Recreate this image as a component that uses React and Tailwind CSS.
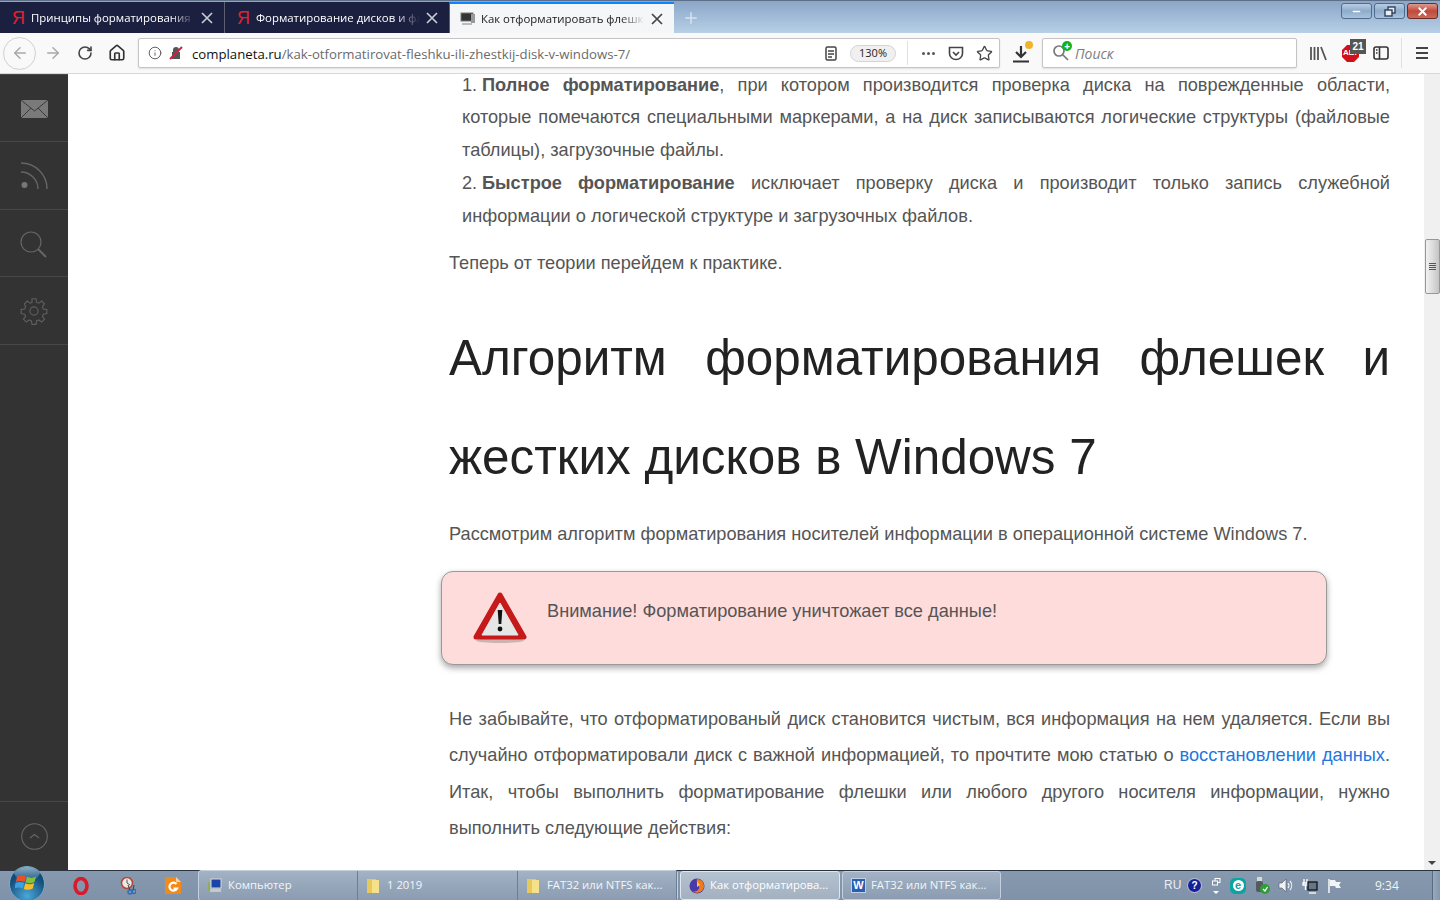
import React from "react";
import { ArrowLeft, ArrowRight, RotateCw, Home, Info, Star, Plus, Minus, X } from "lucide-react";

const SANS = "font-['Liberation_Sans',Arial,sans-serif]";
const UI = "font-['Open_Sans',sans-serif]";

function CloseIcon({ color }) {
  return (
    <svg width="12" height="12" viewBox="0 0 12 12" fill="none" stroke={color} strokeWidth="1.7" className="ml-auto shrink-0">
      <path d="M1 1l10 10M11 1L1 11" />
    </svg>
  );
}

function YandexIcon() {
  return <span className="w-[12px] text-center text-[18px] leading-none text-[#e0222c] font-['Liberation_Sans',sans-serif]">Я</span>;
}

function Tab({ title, active, icon }) {
  if (active) {
    return (
      <div className="relative flex h-[31px] w-[224px] items-center border-t-2 border-[#0a84ff] bg-[#f5f6f7] pl-[10px] pr-[11px]">
        {icon}
        <span className={`ml-[5px] w-[164px] overflow-hidden whitespace-nowrap text-[11.4px] text-[#1a1a1a] [mask-image:linear-gradient(to_right,black_85%,transparent)] ${UI}`}>{title}</span>
        <CloseIcon color="#444" />
      </div>
    );
  }
  return (
    <div className="flex h-[31px] w-[225px] items-center border-r border-[#5a6070] bg-[#1c2040] pl-[12px] pr-[11px]">
      {icon}
      <span className={`ml-[7px] w-[164px] overflow-hidden whitespace-nowrap text-[11.4px] text-white [mask-image:linear-gradient(to_right,white_85%,transparent)] ${UI}`}>{title}</span>
      <CloseIcon color="#c8cad2" />
    </div>
  );
}

function WinButtons() {
  return (
    <div className="mr-[2px] mt-[2px] flex gap-[2px] self-start">
      <div className="flex h-[16px] w-[31px] items-center justify-center rounded-[3px] border border-[#4e6a8c] bg-gradient-to-b from-[#b9cde3] via-[#8eabcb] to-[#a8c3dd]">
        <Minus size={11} strokeWidth={3} className="text-white" />
      </div>
      <div className="flex h-[16px] w-[31px] items-center justify-center rounded-[3px] border border-[#4e6a8c] bg-gradient-to-b from-[#b9cde3] via-[#8eabcb] to-[#a8c3dd]">
        <svg width="12" height="11" viewBox="0 0 12 11" fill="none" stroke="#30405a" strokeWidth="1.4">
          <rect x="4" y="1" width="7" height="6" fill="#e8eef5" />
          <rect x="1" y="4" width="7" height="6" fill="#e8eef5" />
        </svg>
      </div>
      <div className="flex h-[16px] w-[31px] items-center justify-center rounded-[3px] border border-[#6e2a26] bg-gradient-to-b from-[#dc9a8e] via-[#c0493a] to-[#c86a58]">
        <X size={13} strokeWidth={3.5} className="text-white" />
      </div>
    </div>
  );
}

function TitleBar() {
  return (
    <div className="flex h-[33px] items-end border-t border-[#5d6f87] bg-gradient-to-b from-[#8ba6c8] to-[#b7d0e7]">
      <Tab title="Принципы форматирования в Windows" icon={<YandexIcon />} />
      <Tab title="Форматирование дисков и флешек" icon={<YandexIcon />} />
      <Tab
        active
        title="Как отформатировать флешку или"
        icon={
          <svg width="16" height="14" viewBox="0 0 16 14">
            <rect x="1" y="1" width="12" height="8" fill="#333" stroke="#777" />
            <rect x="11" y="2" width="4" height="9" fill="#999" />
            <rect x="2" y="11" width="10" height="2" fill="#bbb" />
          </svg>
        }
      />
      <Plus size={18} strokeWidth={2} className="mb-[6px] ml-[8px] text-[#d6e3f0]" />
      <div className="ml-auto self-start">
        <WinButtons />
      </div>
    </div>
  );
}

function Toolbar() {
  return (
    <div className={`flex h-[41px] items-center border-b border-[#d8d8da] bg-[#f9f9fa] pl-[3px] text-[#444] ${UI}`}>
      <div className="flex h-[33px] w-[33px] shrink-0 items-center justify-center rounded-full border border-[#d0d0d0]">
        <ArrowLeft size={18} className="text-[#a8a8aa]" />
      </div>
      <ArrowRight size={18} className="ml-[8px] shrink-0 text-[#a8a8aa]" />
      <RotateCw size={16} strokeWidth={2.4} className="ml-[15px] shrink-0 text-[#444]" />
      <Home size={18} strokeWidth={2.2} className="ml-[15px] shrink-0 text-[#333]" />

      <div className="ml-[12px] flex h-[30px] w-[862px] shrink-0 items-center rounded-[2px] border border-[#c4c4c6] bg-white pl-[9px] pr-[6px] shadow-[0_1px_2px_rgba(0,0,0,0.1)]">
        <Info size={14} strokeWidth={1.6} className="shrink-0 text-[#555]" />
        <svg width="14" height="14" viewBox="0 0 14 14" className="ml-[7px] shrink-0">
          <path d="M4 6V4a3 3 0 0 1 6 0v2h1v7H3V6z" fill="#555" />
          <path d="M1 13L13 1" stroke="#e8173c" strokeWidth="2" />
        </svg>
        <span className="ml-[9px] mt-[3px] text-[13.2px] text-[#111]">complaneta.ru</span>
        <span className="mt-[3px] text-[13.2px] text-[#6b6b6b]">/kak-otformatirovat-fleshku-ili-zhestkij-disk-v-windows-7/</span>
        <svg width="12" height="15" viewBox="0 0 12 15" fill="none" stroke="#444" strokeWidth="1.5" className="ml-auto shrink-0">
          <rect x="1" y="1" width="10" height="13" rx="1.5" />
          <path d="M3 5h6M3 8h6M3 11h4" />
        </svg>
        <span className="ml-[13px] flex h-[17px] w-[46px] shrink-0 items-center justify-center rounded-full border border-[#d4d4d4] bg-[#f0f0f0] text-[11px] text-[#222]">130%</span>
        <span className="ml-[11px] h-[24px] w-px shrink-0 bg-[#e0e0e0]" />
        <span className="ml-[14px] flex shrink-0 gap-[2px]">
          <span className="h-[3px] w-[3px] rounded-full bg-[#555]" />
          <span className="h-[3px] w-[3px] rounded-full bg-[#555]" />
          <span className="h-[3px] w-[3px] rounded-full bg-[#555]" />
        </span>
        <svg width="16" height="15" viewBox="0 0 16 15" fill="none" stroke="#444" strokeWidth="1.6" className="ml-[13px] shrink-0">
          <path d="M1.5 1.5h13v6a6.5 6 0 0 1-13 0z" />
          <path d="M5 6l3 3 3-3" />
        </svg>
        <Star size={17} strokeWidth={1.8} className="ml-[12px] shrink-0 text-[#444]" />
      </div>

      <div className="relative ml-[10px] flex w-[22px] shrink-0 justify-center">
        <svg width="16" height="19" viewBox="0 0 16 19" fill="none" stroke="#333" strokeWidth="2.2">
          <path d="M8 2v11M3 8l5 5 5-5M0 17.5h16" />
        </svg>
        <span className="absolute right-[-1px] top-[-3px] h-[8px] w-[8px] rounded-full bg-[#f0b429]" />
      </div>

      <div className="ml-[10px] flex h-[30px] w-[255px] shrink-0 items-center rounded-[2px] border border-[#c4c4c6] bg-white pl-[9px] shadow-[0_1px_2px_rgba(0,0,0,0.1)]">
        <div className="relative h-[18px] w-[20px]">
          <svg width="18" height="18" viewBox="0 0 18 18" fill="none" stroke="#777" strokeWidth="1.7">
            <circle cx="7" cy="7" r="5" />
            <path d="M11 11l5 5" />
          </svg>
          <span className="absolute right-0 top-[-3px] flex h-[10px] w-[10px] items-center justify-center rounded-full bg-[#10b418] text-[10px] font-bold leading-none text-white">+</span>
        </div>
        <span className="ml-[3px] mt-[1px] text-[14px] italic text-[#7d7d7d]">Поиск</span>
      </div>

      <svg width="17" height="15" viewBox="0 0 17 15" fill="none" stroke="#555" strokeWidth="1.8" className="ml-[13px] shrink-0">
        <path d="M1 1v13M4.5 1v13M8 1v13M11 1l5 13" />
      </svg>
      <div className="relative ml-[15px] h-[17px] w-[17px] shrink-0">
        <svg width="17" height="17" viewBox="0 0 17 17">
          <path d="M5 0h7l5 5v7l-5 5H5l-5-5V5z" fill="#d0101c" />
        </svg>
        <span className={`absolute inset-0 flex items-center pl-[1px] text-[8px] font-bold text-white ${SANS}`}>ABP</span>
        <span className={`absolute left-[8px] top-[-6px] flex h-[15px] w-[16px] items-center justify-center bg-[#555] text-[10px] font-bold text-white ${SANS}`}>21</span>
      </div>
      <svg width="16" height="14" viewBox="0 0 16 14" fill="none" stroke="#333" strokeWidth="1.6" className="ml-[14px] shrink-0">
        <rect x="1" y="1" width="14" height="12" rx="2" />
        <path d="M6.5 1v12M3 4h1.5M3 7h1.5" />
      </svg>
      <span className="ml-[12px] h-[30px] w-px shrink-0 bg-[#e0e0e0]" />
      <svg width="12" height="12" viewBox="0 0 12 12" fill="none" stroke="#444" strokeWidth="1.8" className="ml-[14px] shrink-0">
        <path d="M0 1h12M0 6h12M0 11h12" />
      </svg>
    </div>
  );
}

function SideItem({ h, children }) {
  return <div className={`flex items-center justify-center border-t border-[#474747] ${h}`}>{children}</div>;
}

function Sidebar() {
  return (
    <div className="flex w-[68px] shrink-0 flex-col bg-[#333333]">
      <SideItem h="h-[67px] pt-[2px]">
        <svg width="27" height="18" viewBox="0 0 27 18">
          <rect width="27" height="18" fill="#7a7a7a" />
          <path d="M0 0l13.5 11L27 0M0 18l10-10M27 18L17 8" fill="none" stroke="#3a3a3a" strokeWidth="1" />
        </svg>
      </SideItem>
      <SideItem h="h-[68px]">
        <svg width="27" height="27" viewBox="0 0 27 27" fill="none" stroke="#666" strokeWidth="1.4">
          <circle cx="3.5" cy="23" r="3" fill="#777" stroke="none" />
          <path d="M0 10a17 17 0 0 1 17 17M0 1a26 26 0 0 1 26 26" />
        </svg>
      </SideItem>
      <SideItem h="h-[67px] pt-[3px] pr-[1px]">
        <svg width="27" height="27" viewBox="0 0 27 27" fill="none" stroke="#666">
          <circle cx="11" cy="11" r="10" strokeWidth="1.2" />
          <path d="M18 18l8 8" strokeWidth="2" />
        </svg>
      </SideItem>
      <SideItem h="h-[68px]">
        <svg width="28" height="28" viewBox="0 0 24 24" fill="none" stroke="#5e5e5e" strokeWidth="1">
          <circle cx="12" cy="12" r="3.5" />
          <path d="M10.3 1.5h3.4l.5 3 1.9.8 2.5-1.8 2.4 2.4-1.8 2.5.8 1.9 3 .5v3.4l-3 .5-.8 1.9 1.8 2.5-2.4 2.4-2.5-1.8-1.9.8-.5 3h-3.4l-.5-3-1.9-.8-2.5 1.8-2.4-2.4 1.8-2.5-.8-1.9-3-.5v-3.4l3-.5.8-1.9L3.8 5.9l2.4-2.4 2.5 1.8 1.6-.7z" />
        </svg>
      </SideItem>
      <div className="flex flex-1 flex-col justify-end border-t border-[#474747]">
        <div className="flex h-[69px] items-center justify-center border-t border-[#474747]">
          <svg width="27" height="27" viewBox="0 0 27 27" fill="none" stroke="#666" strokeWidth="1.1">
            <circle cx="13.5" cy="13.5" r="12.8" />
            <path d="M9 15l4.5-3.5L18 15" />
          </svg>
        </div>
      </div>
    </div>
  );
}

function WarningIcon() {
  return (
    <svg width="54" height="52" viewBox="0 0 54 52" className="shrink-0">
      <ellipse cx="27" cy="48.5" rx="24" ry="2.5" fill="#b9a0a0" opacity="0.7" />
      <path d="M27 3L51 45H3z" fill="#c61a1a" stroke="#c61a1a" strokeWidth="5" strokeLinejoin="round" />
      <path d="M27 11L45 43H9z" fill="#e6e6e6" stroke="#e6e6e6" />
      <path d="M24.7 18h4.6l-1 14h-2.6z" fill="#111" />
      <circle cx="27" cy="37" r="2.4" fill="#111" />
    </svg>
  );
}

function Scrollbar() {
  return (
    <div className="absolute bottom-0 right-0 top-0 w-[16px] bg-[#f0f0f0]">
      <div className="absolute left-[1px] top-[165px] flex h-[55px] w-[15px] flex-col items-center justify-center gap-[1px] rounded-[2px] border border-[#979797] bg-gradient-to-r from-[#f2f2f2] via-[#dcdcdc] to-[#c4c4c4]">
        <span className="h-[1px] w-[7px] bg-[#555]" />
        <span className="h-[1px] w-[7px] bg-[#555]" />
        <span className="h-[1px] w-[7px] bg-[#555]" />
        <span className="h-[1px] w-[7px] bg-[#555]" />
      </div>
      <span className="absolute bottom-[5px] left-[4px] h-0 w-0 border-x-[4px] border-t-[4px] border-x-transparent border-t-[#444]" />
    </div>
  );
}

function Article() {
  return (
    <div className="relative flex-1 overflow-hidden bg-white">
      <div className="-mt-[5.2px] ml-[381px] w-[941px] text-justify text-[18.2px] text-[#555555]">
        <ol className="ml-[13px] list-none leading-[32.5px]">
          <li><span className="inline-block w-[20px]">1.</span><b className="font-bold">Полное форматирование</b>, при котором производится проверка диска на поврежденные области, которые помечаются специальными маркерами, а на диск записываются логические структуры (файловые таблицы), загрузочные файлы.</li>
          <li className="mt-[0.7px]"><span className="inline-block w-[20px]">2.</span><b className="font-bold">Быстрое форматирование</b> исключает проверку диска и производит только запись служебной информации о логической структуре и загрузочных файлов.</li>
        </ol>
        <p className="mt-[13.1px] leading-[36.5px]">Теперь от теории перейдем к практике.</p>
        <h2 className="mt-[26.75px] text-[49.4px] font-normal leading-[99px] text-[#222222]">Алгоритм форматирования флешек и жестких дисков в Windows 7</h2>
        <p className="mt-[9.5px] leading-[36.5px]">Рассмотрим алгоритм форматирования носителей информации в операционной системе Windows 7.</p>
        <div className="-ml-[8px] mt-[19px] flex h-[93.5px] w-[886px] rounded-[12px] border border-[#999999] bg-[#ffdcdc] pl-[31px] pt-[20px] shadow-[0_3px_6px_rgba(0,0,0,0.35)]">
          <WarningIcon />
          <span className="ml-[20px] mt-[1px] text-left leading-[36.5px]">Внимание! Форматирование уничтожает все данные!</span>
        </div>
        <p className="mt-[36px] leading-[36.5px]">
          Не забывайте, что отформатированый диск становится чистым, вся информация на нем удаляется. Если вы случайно отформатировали диск с важной информацией, то прочтите мою статью о <span className="text-[#2277dd]">восстановлении данных</span>. Итак, чтобы выполнить форматирование флешки или любого другого носителя информации, нужно выполнить следующие действия:
        </p>
      </div>
      <Scrollbar />
    </div>
  );
}

function TaskButton({ icon, label, w, active, grouped }) {
  const cls = active
    ? "rounded-[3px] border border-[#dfe6ee] bg-gradient-to-b from-[#b5c2d0] to-[#a2b0c0] text-white"
    : grouped
      ? "border-r border-[#6c7e93] text-[#f3f5f8]"
      : "rounded-[3px] border border-[#c4d0dd] bg-gradient-to-b from-[#a3b2c4] to-[#8b9cb1] text-[#f3f5f8]";
  return (
    <div className={`flex h-[29px] shrink-0 items-center gap-[5px] whitespace-nowrap pl-[8px] text-[11.3px] ${UI} ${w} ${cls}`}>
      {icon}
      <span>{label}</span>
    </div>
  );
}

function FolderIcon() {
  return (
    <svg width="16" height="16" viewBox="0 0 16 16">
      <rect x="1" y="1" width="9" height="14" fill="#e8c95a" />
      <rect x="6" y="2" width="7" height="13" fill="#f5e08c" />
    </svg>
  );
}

function StartOrb() {
  return (
    <div className="absolute left-[9px] top-[-5px] flex h-[36px] w-[36px] items-center justify-center overflow-hidden rounded-full border border-[#7fa6c4] bg-[radial-gradient(circle_at_50%_85%,#4aa8d8,#14517f_60%,#0e3a5e)]">
      <span className="absolute left-[3px] right-[3px] top-0 h-[15px] rounded-b-full bg-gradient-to-b from-[#c5deef] to-transparent opacity-70" />
      <svg width="24" height="22" viewBox="0 0 24 22" className="relative -mt-[4px]">
        <path d="M2 6c3-2 6-2 9-.5L9.5 11C6.5 9.5 3.5 9.5 .8 11z" fill="#e8502c" />
        <path d="M12 5.8c3 1.5 6 1.5 9-.3L19.5 11c-3 1.7-6 1.7-9 .3z" fill="#86bf3a" />
        <path d="M.5 12c3-1.5 6-1.5 8.7 0L7.8 17.5C5 16 2.3 16-.5 17.5z" fill="#3f9fe2" />
        <path d="M10.2 12.3c3 1.3 6 1.3 9-.3L17.8 17.6c-3 1.6-6 1.6-9 .3z" fill="#f4bd2c" />
      </svg>
    </div>
  );
}

function Taskbar() {
  return (
    <div className="relative flex h-[30px] items-center border-t border-[#2a3442] bg-gradient-to-b from-[#8799ae] to-[#7f92a9] text-white">
      <StartOrb />
      <div className="ml-[73px] flex w-[125px] items-center">
        <svg width="16" height="18" viewBox="0 0 16 18" className="shrink-0">
          <ellipse cx="8" cy="9" rx="6" ry="7.5" fill="none" stroke="#d81a2a" strokeWidth="3.6" />
        </svg>
        <svg width="16" height="18" viewBox="0 0 16 18" className="ml-[31px] shrink-0">
          <circle cx="7" cy="6" r="5.5" fill="#ece8e2" stroke="#b04a40" strokeWidth="1.6" />
          <path d="M7 2.5V6l3 2" stroke="#555" fill="none" />
          <circle cx="10" cy="15" r="2" fill="none" stroke="#2f6fb8" strokeWidth="1.5" />
          <circle cx="14" cy="14.5" r="2" fill="none" stroke="#2f6fb8" strokeWidth="1.5" />
          <path d="M8 8l2 5M14 8l-1 5" stroke="#39424e" />
        </svg>
        <svg width="16" height="17" viewBox="0 0 16 17" className="ml-[29px] shrink-0">
          <path d="M0 0h11l5 5v12H0z" fill="#f28a1a" />
          <path d="M11 0l5 5h-5z" fill="#fbd09a" />
          <path d="M11.5 7a4 4 0 1 0 .5 4.5H8.5" fill="none" stroke="#fff" strokeWidth="2.2" />
        </svg>
      </div>
      <div className="flex w-[480px] rounded-[3px] border border-[#c4d0dd] bg-gradient-to-b from-[#a3b2c4] to-[#8b9cb1]">
        <TaskButton
          w="w-[159px]"
          grouped
          label="Компьютер"
          icon={
            <svg width="16" height="15" viewBox="0 0 16 15">
              <rect x="4" y="1" width="10" height="9" fill="#1c44a8" stroke="#d8d8d8" />
              <rect x="3" y="11" width="11" height="3" fill="#c8c8c8" />
              <rect x="1" y="4" width="2" height="9" fill="#8fae5a" />
            </svg>
          }
        />
        <TaskButton w="w-[160px]" grouped label="1 2019" icon={<FolderIcon />} />
        <TaskButton w="w-[159px]" grouped label="FAT32 или NTFS как..." icon={<FolderIcon />} />
      </div>
      <div className="ml-[2px]">
        <TaskButton
          w="w-[160px]"
          active
          label="Как отформатирова..."
          icon={
            <svg width="16" height="16" viewBox="0 0 16 16">
              <circle cx="8" cy="8" r="7.5" fill="#4a3aa8" />
              <path d="M8 1a7 7 0 0 1 7 7 7 7 0 0 1-11 5.5C7 14 11 12 10 8 9.5 6 7 5 8 1z" fill="#f0791c" />
              <path d="M8 3l3 4-3 2z" fill="#ffcb2c" />
            </svg>
          }
        />
      </div>
      <div className="ml-[2px]">
        <TaskButton
          w="w-[159px]"
          label="FAT32 или NTFS как..."
          icon={
            <span className={`flex h-[15px] w-[15px] items-center justify-center border border-[#bcd0ec] bg-[#2a5eb0] text-[11px] font-bold text-white ${SANS}`}>W</span>
          }
        />
      </div>

      <div className={`ml-[163px] flex items-center text-[12px] ${SANS}`}>
        <span className="-mt-[2px] w-[16px] text-[#e8edf3]">RU</span>
        <span className="ml-[7px] flex h-[15px] w-[15px] shrink-0 items-center justify-center rounded-full border border-[#c8c8d8] bg-[#14209a] text-[10px] font-bold text-white">?</span>
        <div className="ml-[9px] flex w-[10px] shrink-0 flex-col items-center gap-[5px]">
          <svg width="9" height="8" viewBox="0 0 9 8" fill="none" stroke="#fff">
            <rect x="3" y="0.5" width="5" height="4" />
            <rect x="0.5" y="3" width="5" height="4" fill="#7f92a9" />
          </svg>
          <span className="h-0 w-0 border-x-[3px] border-t-[3px] border-x-transparent border-t-white" />
        </div>
        <span className="ml-[9px] flex h-[16px] w-[16px] shrink-0 items-center justify-center rounded-[5px] bg-[#0aa5a0]">
          <span className="flex h-[11px] w-[11px] items-center justify-center rounded-full bg-white text-[11px] font-bold leading-none text-[#0aa5a0]">e</span>
        </span>
        <svg width="15" height="17" viewBox="0 0 15 17" className="ml-[9px] shrink-0">
          <rect x="2" y="0" width="5" height="5" fill="#d8d8d8" />
          <rect x="1" y="4" width="7" height="11" rx="2" fill="#555a62" />
          <circle cx="10" cy="12" r="5" fill="#2f9e34" />
          <path d="M8 12l2 2 2.5-4" stroke="#fff" strokeWidth="1.3" fill="none" />
        </svg>
        <svg width="15" height="15" viewBox="0 0 15 15" fill="none" className="ml-[8px] shrink-0">
          <path d="M1 5h3l4-4v13l-4-4H1z" fill="#f2f2f2" stroke="#556" strokeWidth=".6" />
          <path d="M10 5a4 4 0 0 1 0 5M12 3a7 7 0 0 1 0 9" stroke="#eef2f6" strokeWidth="1.2" />
        </svg>
        <svg width="16" height="16" viewBox="0 0 16 16" fill="none" stroke="#fff" strokeWidth="1.3" className="ml-[9px] shrink-0">
          <path d="M2 1v4h3V1M1 5h5v2H1zM3.5 7v5" />
          <rect x="6" y="4" width="9" height="8" fill="#66768a" stroke="#111" />
          <path d="M7 15h7" />
        </svg>
        <svg width="15" height="16" viewBox="0 0 15 16" className="ml-[9px] shrink-0">
          <path d="M2 1v14" stroke="#fff" strokeWidth="1.4" />
          <path d="M3 2h5l1 2h5l-2 3 2 3H9L8 8H3z" fill="#f2f4f6" />
        </svg>
        <span className={`ml-[33px] text-[12px] text-[#f2f5f8] ${UI}`}>9:34</span>
      </div>
      <span className="absolute bottom-0 right-0 top-0 w-[8px] border-l border-[#5a6a7e] bg-gradient-to-r from-[#9aa9bb] to-[#8497ad]" />
    </div>
  );
}

export default function App() {
  return (
    <div className={`flex h-[900px] w-[1440px] flex-col overflow-hidden ${SANS}`}>
      <TitleBar />
      <Toolbar />
      <div className="flex min-h-0 flex-1">
        <Sidebar />
        <Article />
      </div>
      <Taskbar />
    </div>
  );
}
